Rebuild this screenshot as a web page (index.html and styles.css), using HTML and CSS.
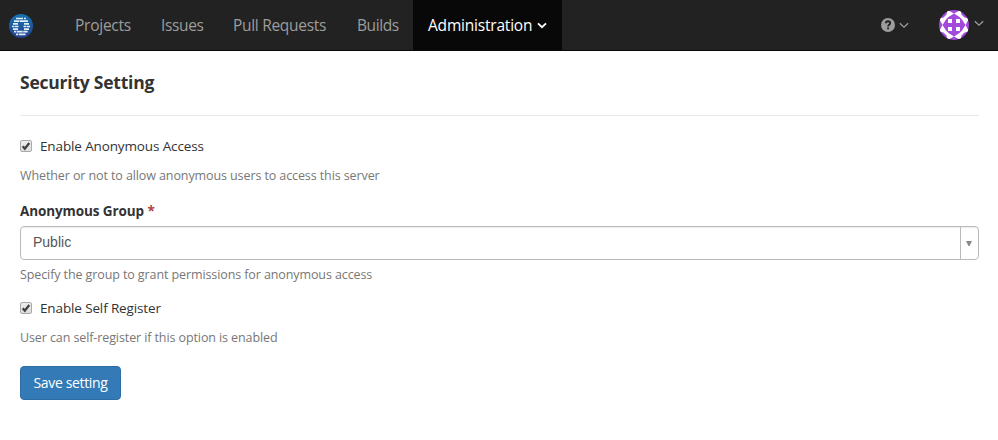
FILE: index.html
```html
<!DOCTYPE html>
<html lang="en">
<head>
<meta charset="utf-8">
<title>Security Setting</title>
<link rel="stylesheet" href="styles.css">
</head>
<body>
<header class="navbar">
  <a class="brand" href="#" aria-label="Home">
    <svg width="24" height="24" viewBox="0 0 24 24">
      <defs><linearGradient id="logo-fill" x1="0" y1="0" x2="0" y2="1"><stop offset="0" stop-color="#1673b4"/><stop offset="1" stop-color="#25408c"/></linearGradient></defs>
      <circle cx="12" cy="12" r="12" fill="url(#logo-fill)"/>
      <path fill="none" stroke="#e3edf6" stroke-width="1.700" d="M7 4.500h7M15 4.500h2M5 7.200h5.500M11 7.200h8M4 9.900h5M15 9.900h5M3 12.500h2M5.500 12.500h4M14.500 12.500h3M18 12.500h3M4 15.100h5M15 15.100h5M5 17.700h2M7.600 17.700h6M14.200 17.700h4.500M7 20.300h2M9.600 20.300h7"/>
    </svg>
  </a>
  <nav class="menu">
    <a class="menu-item projects" href="#">Projects</a>
    <a class="menu-item issues" href="#">Issues</a>
    <a class="menu-item pulls" href="#">Pull Requests</a>
    <a class="menu-item builds" href="#">Builds</a>
    <a class="menu-item active" href="#">Administration<svg class="caret" width="10" height="7" viewBox="0 0 10 7"><path d="M1 1.300 5 5.200 9 1.300" fill="none" stroke="currentColor" stroke-width="1.800"/></svg></a>
  </nav>
  <div class="tools">
    <a class="help" href="#" aria-label="Help">
      <svg width="14" height="14" viewBox="0 0 14 14"><circle cx="7" cy="7" r="7" fill="#9d9d9d"/><path d="M4.900 5.200C5 2.500 9.200 2.700 9.200 5.100 9.200 6.700 7.100 6.700 7.100 8.400M7.100 9.500v1.800" fill="none" stroke="#222" stroke-width="1.900"/></svg>
      <svg width="10" height="7" viewBox="0 0 10 7"><path d="M.8 1.200 5 5.200 9.200 1.200" fill="none" stroke="#9d9d9d" stroke-width="1.300"/></svg>
    </a>
    <a class="account" href="#" aria-label="Account">
      <svg width="30" height="30" viewBox="0 0 30 30">
        <defs><clipPath id="round"><circle cx="15" cy="15" r="15"/></clipPath></defs>
        <g clip-path="url(#round)">
          <path fill="#a349dc" d="M0 0h30v30H0z"/>
          <g id="corners" fill="#fff">
            <path id="corner" d="M15 3.500 9.500 7 7 9.500 3.500 15 0 8.500 4.500 7.500 7.500 4.500 8.500 0z"/>
            <use href="#corner" transform="rotate(90 15 15)"/>
            <use href="#corner" transform="rotate(180 15 15)"/>
            <use href="#corner" transform="rotate(270 15 15)"/>
          </g>
          <path fill="#fff" d="M9 9h4v4H9zM17 9h4v4h-4zM9 17h4v4H9zM17 17h4v4h-4z"/>
        </g>
      </svg>
      <svg class="account-caret" width="10" height="7" viewBox="0 0 10 7"><path d="M.8 1.200 5 5.200 9.200 1.200" fill="none" stroke="#9d9d9d" stroke-width="1.300"/></svg>
    </a>
  </div>
</header>
<main class="content">
  <h1 class="title"><span>Security Setting</span></h1>
  <form>
    <label class="check"><span class="box"><svg width="12" height="12" viewBox="0 0 12 12"><path d="M2.700 6.200 4.800 8.600 9.300 3" fill="none" stroke="#424242" stroke-width="2.300"/></svg></span><span>Enable Anonymous Access</span></label>
    <p class="hint hint-access">Whether or not to allow anonymous users to access this server</p>
    <div class="group-label">Anonymous Group <span class="required">*</span></div>
    <div class="select"><span class="value">Public</span><span class="arrow"><svg width="6" height="5" viewBox="0 0 6 5"><path d="M0 0h6L3.500 5h-1z" fill="#888"/></svg></span></div>
    <p class="hint hint-group">Specify the group to grant permissions for anonymous access</p>
    <label class="check"><span class="box"><svg width="12" height="12" viewBox="0 0 12 12"><path d="M2.700 6.200 4.800 8.600 9.300 3" fill="none" stroke="#424242" stroke-width="2.300"/></svg></span><span>Enable Self Register</span></label>
    <p class="hint hint-register">User can self-register if this option is enabled</p>
    <button class="save" type="button">Save setting</button>
  </form>
</main>
</body>
</html>
```
FILE: styles.css
```css
* { box-sizing: border-box; }
body {
  margin: 0;
  background: #fff;
  color: #333;
  font: 14px/20px "Open Sans", "Noto Sans", sans-serif;
}
svg { display: block; flex: none; }
a { color: inherit; text-decoration: none; }
.navbar {
  display: flex;
  height: 51px;
  background: #222;
  border-bottom: 1px solid #080808;
  color: #9d9d9d;
}
.brand { width: 60px; padding: 14px 0 0 9px; }
.menu { display: flex; font-size: 15.5px; }
.menu-item {
  display: flex;
  align-items: center;
  height: 50px;
  padding: 0 0 0 15px;
  white-space: nowrap;
}
.projects { width: 86px; letter-spacing: -.25px; }
.issues { width: 72px; letter-spacing: -.35px; }
.pulls { width: 124px; letter-spacing: -.3px; }
.builds { width: 71px; letter-spacing: -.4px; }
.active { width: 149px; background: #080808; color: #fff; letter-spacing: -.2px; }
.caret { margin-left: auto; margin-right: 15px; }
.tools { display: flex; flex: 1; justify-content: flex-end; padding-right: 14px; }
.help { display: flex; align-items: center; gap: 4px; margin-right: 30px; }
.account { display: flex; align-items: center; gap: 5px; }
.account-caret { margin-top: -4px; }
.content { padding: 0 19px 0 20px; }
.title {
  height: 65px;
  margin: 0 0 20px;
  padding-top: 19px;
  border-bottom: 1px solid #e7e7e7;
  font-size: 17.5px;
  line-height: 24px;
  letter-spacing: -.23px;
}
.check { display: flex; align-items: center; height: 20px; gap: 8px; font-size: 13.5px; letter-spacing: -.13px; }
.box {
  width: 12px;
  height: 12px;
  border: 1px solid #a9a9a9;
  border-radius: 2px;
  background: linear-gradient(#eee, #dedede);
}
.box svg { margin: -1px; }
.hint { margin: 0; color: #777; font-size: 12.5px; letter-spacing: -.1px; }
.hint-access { margin-top: 10px; }
.group-label { margin-top: 15px; font-size: 13.5px; font-weight: 700; letter-spacing: -.1px; }
.required { color: #a94442; }
.select {
  display: flex;
  height: 34px;
  margin-top: 5px;
  border: 1px solid #bbb;
  border-radius: 4px;
  box-shadow: inset 0 1px 1px rgba(0, 0, 0, .075);
  color: #555;
  font: 14px/31px "Liberation Sans", sans-serif;
}
.value { flex: 1; padding-left: 12px; }
.arrow { display: flex; align-items: center; justify-content: center; width: 18px; padding-right: 1px; border-left: 1px solid #bbb; }
.hint-group { margin: 5px 0 13px; }
.hint-register { margin-top: 10px; }
.save {
  display: block;
  width: 101px;
  height: 34px;
  margin-top: 18px;
  padding: 0;
  border: 1px solid #2e6da4;
  border-radius: 4px;
  background: #337ab7;
  color: #fff;
  font: inherit;
  letter-spacing: -.35px;
}
```
